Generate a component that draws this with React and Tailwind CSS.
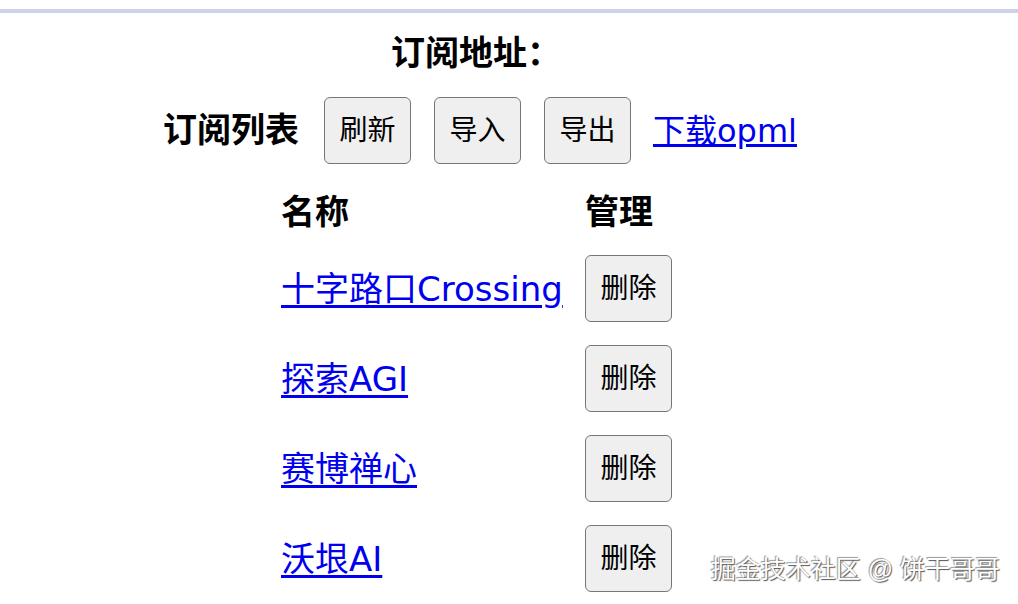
const feeds = ["十字路口Crossing", "探索AGI", "赛博禅心", "沃垠AI"];

const font = {
  fontFamily: '"Liberation Sans", "Noto Sans CJK SC", sans-serif',
};

const linkFont = {
  fontFamily: '"DejaVu Sans", "Noto Sans CJK SC", sans-serif',
};

const Btn = ({ children }) => (
  <button
    className="h-[67px] w-[87px] shrink-0 rounded-[6px] border-[1.5px] border-[#767676] bg-[#efefef] text-[28px] text-black"
    style={font}
  >
    {children}
  </button>
);

const App = () => {
  return (
    <div className="relative h-[604px] w-[1018px] overflow-hidden bg-white" style={font}>
      <div className="mt-[9px] h-[4px] w-full bg-[#cdd1ec]" />

      <h2 className="ml-[391px] mt-[20px] text-[34px] font-bold leading-[40px] text-black">
        订阅地址：
      </h2>

      <div className="ml-[163px] mt-[24px] flex items-center">
        <span className="text-[34px] font-bold text-black">订阅列表</span>
        <div className="ml-[25px] flex items-center gap-[23px]">
          <Btn>刷新</Btn>
          <Btn>导入</Btn>
          <Btn>导出</Btn>
        </div>
        <a
          href="#"
          className="ml-[22px] text-[32px] leading-[40px] text-[#0000ee] underline"
          style={linkFont}
        >
          下载opml
        </a>
      </div>

      <div className="ml-[281px] mt-[28px] grid grid-cols-[304px_87px] gap-y-[23px]">
        <div className="text-[34px] font-bold leading-[40px] text-black">名称</div>
        <div className="text-[34px] font-bold leading-[40px] text-black">管理</div>
        {feeds.map((name) => (
          <div key={name} className="contents">
            <div className="flex items-center">
              <a
                href="#"
                className="text-[34px] leading-[40px] text-[#0000ee] underline underline-offset-4"
                style={linkFont}
              >
                {name}
              </a>
            </div>
            <Btn>删除</Btn>
          </div>
        ))}
      </div>

      <div className="absolute bottom-[16px] right-[18px] text-[25px] text-white [text-shadow:1px_1px_1px_#555,-1px_-1px_1px_#999]">
        掘金技术社区 @ 饼干哥哥
      </div>
    </div>
  );
};

export default App;
